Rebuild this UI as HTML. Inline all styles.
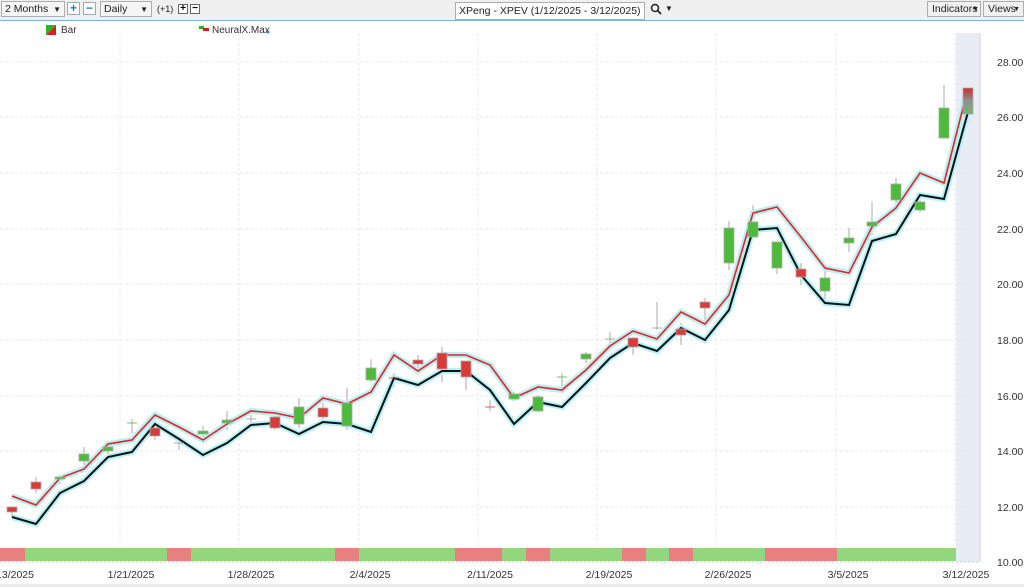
<!DOCTYPE html>
<html><head><meta charset="utf-8"><style>
body{margin:0;width:1024px;height:587px;overflow:hidden;background:#fff;font-family:"Liberation Sans",sans-serif;}
.tb{position:absolute;left:0;top:0;width:1024px;height:20px;background:#f0f0f0;border-bottom:1px solid #7fb2d6;}
.sel{position:absolute;top:1px;height:16px;border:1px solid #adadad;background:#f5f5f5;font-size:10.5px;line-height:15px;padding-left:3px;box-sizing:border-box;color:#222;white-space:nowrap;overflow:hidden}
.btn{position:absolute;top:2px;width:13px;height:13px;border:1px solid #9ab;background:#fff;box-sizing:border-box;font-size:12px;line-height:10px;text-align:center;color:#2a7ccc;font-weight:bold}
.t{position:absolute;font-size:10px;color:#222}
</style></head><body>
<div class="tb">
<div class="sel" style="left:1px;width:64px">2 Months<span style="position:absolute;right:3px;font-size:8px">▼</span></div>
<div class="btn" style="left:67px">+</div><div class="btn" style="left:83px">−</div>
<div class="sel" style="left:100px;width:52px">Daily<span style="position:absolute;right:3px;font-size:8px">▼</span></div>
<span class="t" style="left:157px;top:4px;font-size:9px">(+1)</span>
<div class="btn" style="left:178px;top:4px;width:10px;height:10px;color:#000;font-size:10px;line-height:8px;border-color:#666">+</div>
<div class="btn" style="left:190px;top:4px;width:10px;height:10px;color:#000;font-size:10px;line-height:8px;border-color:#666">−</div>
<div class="sel" style="left:455px;top:2px;width:190px;height:18px;background:#fff;font-size:10.5px;line-height:17px;padding-left:3px">XPeng - XPEV (1/12/2025 - 3/12/2025)</div>
<svg style="position:absolute;left:650px;top:3px" width="12" height="12"><circle cx="5" cy="5" r="3.5" fill="none" stroke="#222" stroke-width="1.5"/><line x1="7.5" y1="7.5" x2="11" y2="11" stroke="#222" stroke-width="1.8"/></svg>
<span class="t" style="left:665px;top:4px;font-size:8px">▼</span>
<div class="sel" style="left:927px;top:1px;width:54px;background:#f0f0f0;padding-left:4px">Indicators<span style="position:absolute;right:1px;font-size:7px">▼</span></div>
<div class="sel" style="left:983px;top:1px;width:41px;background:#f0f0f0;padding-left:4px">Views<span style="position:absolute;right:3px;font-size:7px">▼</span></div>
</div>
<svg width="1024" height="587" style="position:absolute;left:0;top:0" xmlns="http://www.w3.org/2000/svg" font-family="Liberation Sans,sans-serif">
<rect x="956" y="33" width="24" height="529" fill="#e8edf5"/>
<line x1="980" y1="33" x2="980" y2="562" stroke="#c8d3e0"/>
<g stroke="#e8e8e8" stroke-dasharray="3,2">
<line x1="0" y1="62" x2="980" y2="62"/><line x1="0" y1="117" x2="980" y2="117"/><line x1="0" y1="173" x2="980" y2="173"/><line x1="0" y1="229" x2="980" y2="229"/><line x1="0" y1="284" x2="980" y2="284"/><line x1="0" y1="340" x2="980" y2="340"/><line x1="0" y1="396" x2="980" y2="396"/><line x1="0" y1="451" x2="980" y2="451"/><line x1="0" y1="507" x2="980" y2="507"/>
<line x1="120" y1="33" x2="120" y2="562"/><line x1="239" y1="33" x2="239" y2="562"/><line x1="359" y1="33" x2="359" y2="562"/><line x1="478" y1="33" x2="478" y2="562"/><line x1="597" y1="33" x2="597" y2="562"/><line x1="716" y1="33" x2="716" y2="562"/><line x1="836" y1="33" x2="836" y2="562"/><line x1="955" y1="33" x2="955" y2="562"/>
</g>
<g font-size="10.5" fill="#333">
<text x="997" y="66">28.00</text><text x="997" y="121">26.00</text><text x="997" y="177">24.00</text><text x="997" y="233">22.00</text><text x="997" y="288">20.00</text><text x="997" y="344">18.00</text><text x="997" y="400">16.00</text><text x="997" y="455">14.00</text><text x="997" y="511">12.00</text><text x="997" y="566">10.00</text>
</g>
<polygon points="46,25 56,25 46,35" fill="#2cb52c"/><polygon points="56,25 56,35 46,35" fill="#d72020"/>
<text x="61" y="33" font-size="10" fill="#333">Bar</text>
<rect x="199" y="26" width="5" height="3" fill="#2cb52c"/><rect x="203" y="28" width="6" height="3" fill="#d72020"/>
<text x="212" y="33" font-size="10" fill="#333">NeuralX.Max</text><circle cx="268" cy="32" r="1.5" fill="#3a8aa8"/>
<g stroke="#a8a8a8" stroke-width="1">
<line x1="12" y1="506" x2="12" y2="517"/><line x1="36" y1="477" x2="36" y2="493"/><line x1="60" y1="475" x2="60" y2="484"/><line x1="84" y1="447" x2="84" y2="465"/><line x1="108" y1="444" x2="108" y2="455"/><line x1="132" y1="419" x2="132" y2="433"/><line x1="155" y1="425" x2="155" y2="440"/><line x1="179" y1="438" x2="179" y2="450"/><line x1="203" y1="426" x2="203" y2="439"/><line x1="227" y1="411" x2="227" y2="430"/><line x1="251" y1="415" x2="251" y2="423"/><line x1="275" y1="415" x2="275" y2="430"/><line x1="299" y1="398" x2="299" y2="428"/><line x1="323" y1="403" x2="323" y2="420"/><line x1="347" y1="388" x2="347" y2="430"/><line x1="371" y1="359" x2="371" y2="382"/><line x1="394" y1="373" x2="394" y2="387"/><line x1="418" y1="355" x2="418" y2="368"/><line x1="442" y1="347" x2="442" y2="382"/><line x1="466" y1="361" x2="466" y2="390"/><line x1="490" y1="400" x2="490" y2="411"/><line x1="514" y1="392" x2="514" y2="400"/><line x1="538" y1="395" x2="538" y2="412"/><line x1="562" y1="373" x2="562" y2="387"/><line x1="586" y1="352" x2="586" y2="363"/><line x1="610" y1="332" x2="610" y2="343"/><line x1="633" y1="337" x2="633" y2="355"/><line x1="657" y1="302" x2="657" y2="330"/><line x1="681" y1="323" x2="681" y2="345"/><line x1="705" y1="298" x2="705" y2="320"/><line x1="729" y1="221" x2="729" y2="270"/><line x1="753" y1="205" x2="753" y2="238"/><line x1="777" y1="242" x2="777" y2="274"/><line x1="801" y1="263" x2="801" y2="285"/><line x1="825" y1="270" x2="825" y2="300"/><line x1="849" y1="228" x2="849" y2="252"/><line x1="872" y1="202" x2="872" y2="235"/><line x1="896" y1="178" x2="896" y2="203"/><line x1="920" y1="195" x2="920" y2="212"/><line x1="944" y1="85" x2="944" y2="138"/>
</g>
<g fill="none" stroke-linejoin="miter">
<polyline stroke="#b4f2f8" stroke-width="6" points="12,517 36,524 60,493 84,481 108,457 132,452 155,424 179,439 203,455 227,443 251,425 275,423 299,434 323,422 347,424 371,432 394,378 418,385 442,371 466,371 490,390 514,424 538,402 562,407 586,383 610,358 633,343 657,351 681,328 705,340 729,310 753,230 777,228 801,275 825,303 849,305 872,241 896,234 920,195 944,199 968,112"/>
<polyline stroke="#b4f2f8" stroke-width="6" points="12,496 36,505 60,478 84,469 108,444 132,440 155,415 179,427 203,440 227,424 251,411 275,413 299,418 323,398 347,404 371,392 394,355 418,371 442,355 466,355 490,365 514,398 538,387 562,390 586,370 610,346 633,331 657,339 681,312 705,324 729,295 753,213 777,207 801,237 825,268 849,273 872,227 896,208 920,173 944,183 968,88"/>
<polyline stroke="#111" stroke-width="2" points="12,517 36,524 60,493 84,481 108,457 132,452 155,424 179,439 203,455 227,443 251,425 275,423 299,434 323,422 347,424 371,432 394,378 418,385 442,371 466,371 490,390 514,424 538,402 562,407 586,383 610,358 633,343 657,351 681,328 705,340 729,310 753,230 777,228 801,275 825,303 849,305 872,241 896,234 920,195 944,199 968,112"/>
<polyline stroke="#f02020" stroke-width="1.6" points="12,496 36,505 60,478 84,469 108,444 132,440 155,415 179,427 203,440 227,424 251,411 275,413 299,418 323,398 347,404 371,392 394,355 418,371 442,355 466,355 490,365 514,398 538,387 562,390 586,370 610,346 633,331 657,339 681,312 705,324 729,295 753,213 777,207 801,237 825,268 849,273 872,227 896,208 920,173 944,183 968,88"/>
</g>
<defs><linearGradient id="lg" x1="0" y1="0" x2="0" y2="1"><stop offset="0" stop-color="#c83030"/><stop offset="0.5" stop-color="#909090"/><stop offset="1" stop-color="#6cb86c"/></linearGradient></defs>
<g stroke="#aaa" stroke-width="0.8">
<rect x="7" y="507" width="10" height="5" fill="#d93a3a"/>
<rect x="31" y="482" width="10" height="7" fill="#d93a3a"/>
<rect x="55" y="477" width="10" height="2" fill="#4cbb3a"/>
<rect x="79" y="454" width="10" height="7" fill="#4cbb3a"/>
<rect x="103" y="447" width="10" height="4" fill="#4cbb3a"/>
<line x1="127" y1="423" x2="137" y2="423" stroke="#4cbb3a"/>
<rect x="150" y="428" width="10" height="8" fill="#d93a3a"/>
<line x1="174" y1="443" x2="184" y2="443" stroke="#999"/>
<rect x="198" y="431" width="10" height="3" fill="#4cbb3a"/>
<rect x="222" y="420" width="10" height="3" fill="#4cbb3a"/>
<line x1="246" y1="419" x2="256" y2="419" stroke="#999"/>
<rect x="270" y="417" width="10" height="11" fill="#d93a3a"/>
<rect x="294" y="407" width="10" height="17" fill="#4cbb3a"/>
<rect x="318" y="408" width="10" height="9" fill="#d93a3a"/>
<rect x="342" y="403" width="10" height="23" fill="#4cbb3a"/>
<rect x="366" y="368" width="10" height="12" fill="#4cbb3a"/>
<line x1="389" y1="378" x2="399" y2="378" stroke="#d93a3a"/>
<rect x="413" y="360" width="10" height="4" fill="#d93a3a"/>
<rect x="437" y="353" width="10" height="16" fill="#d93a3a"/>
<rect x="461" y="361" width="10" height="16" fill="#d93a3a"/>
<line x1="485" y1="407" x2="495" y2="407" stroke="#d93a3a"/>
<rect x="509" y="394" width="10" height="5" fill="#4cbb3a"/>
<rect x="533" y="397" width="10" height="14" fill="#4cbb3a"/>
<line x1="557" y1="377" x2="567" y2="377" stroke="#4cbb3a"/>
<rect x="581" y="354" width="10" height="5" fill="#4cbb3a"/>
<line x1="605" y1="339" x2="615" y2="339" stroke="#999"/>
<rect x="628" y="338" width="10" height="9" fill="#d93a3a"/>
<line x1="652" y1="328" x2="662" y2="328" stroke="#999"/>
<rect x="676" y="329" width="10" height="6" fill="#d93a3a"/>
<rect x="700" y="302" width="10" height="6" fill="#d93a3a"/>
<rect x="724" y="228" width="10" height="35" fill="#4cbb3a"/>
<rect x="748" y="222" width="10" height="15" fill="#4cbb3a"/>
<rect x="772" y="242" width="10" height="26" fill="#4cbb3a"/>
<rect x="796" y="269" width="10" height="8" fill="#d93a3a"/>
<rect x="820" y="278" width="10" height="13" fill="#4cbb3a"/>
<rect x="844" y="238" width="10" height="5" fill="#4cbb3a"/>
<rect x="867" y="222" width="10" height="4" fill="#4cbb3a"/>
<rect x="891" y="184" width="10" height="16" fill="#4cbb3a"/>
<rect x="915" y="202" width="10" height="8" fill="#4cbb3a"/>
<rect x="939" y="108" width="10" height="30" fill="#4cbb3a"/>
<rect x="963" y="88" width="10" height="26" fill="url(#lg)"/>
</g>
<g>
<rect x="0" y="548" width="25" height="13" fill="#e88080"/>
<rect x="25" y="548" width="142" height="13" fill="#92d77e"/>
<rect x="167" y="548" width="24" height="13" fill="#e88080"/>
<rect x="191" y="548" width="144" height="13" fill="#92d77e"/>
<rect x="335" y="548" width="24" height="13" fill="#e88080"/>
<rect x="359" y="548" width="96" height="13" fill="#92d77e"/>
<rect x="455" y="548" width="47" height="13" fill="#e88080"/>
<rect x="502" y="548" width="24" height="13" fill="#92d77e"/>
<rect x="526" y="548" width="24" height="13" fill="#e88080"/>
<rect x="550" y="548" width="72" height="13" fill="#92d77e"/>
<rect x="622" y="548" width="24" height="13" fill="#e88080"/>
<rect x="646" y="548" width="23" height="13" fill="#92d77e"/>
<rect x="669" y="548" width="24" height="13" fill="#e88080"/>
<rect x="693" y="548" width="72" height="13" fill="#92d77e"/>
<rect x="765" y="548" width="72" height="13" fill="#e88080"/>
<rect x="837" y="548" width="119" height="13" fill="#92d77e"/>
</g>
<line x1="0" y1="562" x2="980" y2="562" stroke="#ccc" stroke-dasharray="2,2"/>
<g font-size="10.5" fill="#333" text-anchor="middle">
<text x="15" y="578">13/2025</text><text x="131" y="578">1/21/2025</text><text x="251" y="578">1/28/2025</text><text x="370" y="578">2/4/2025</text><text x="490" y="578">2/11/2025</text><text x="609" y="578">2/19/2025</text><text x="728" y="578">2/26/2025</text><text x="848" y="578">3/5/2025</text><text x="966" y="578">3/12/2025</text>
</g>
<rect x="0" y="584" width="1024" height="3" fill="#ececec"/>
</svg>
</body></html>
